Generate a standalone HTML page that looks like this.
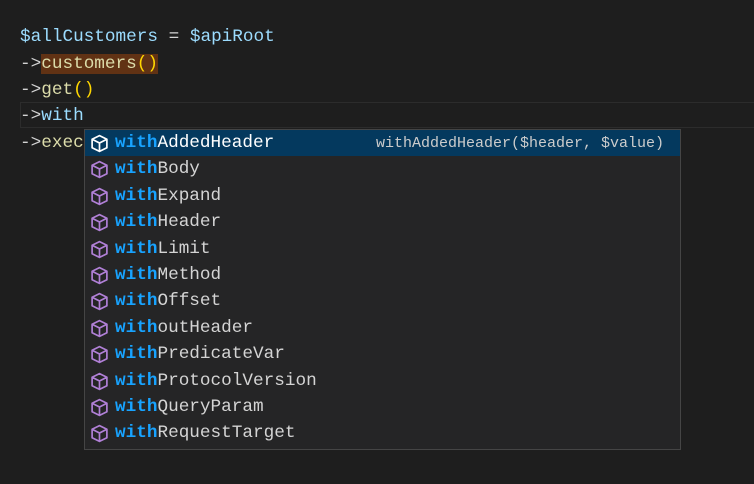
<!DOCTYPE html>
<html><head><style>
body{margin:0;width:754px;height:484px;background:#1e1e1e;overflow:hidden;position:relative;font-family:"Liberation Mono",monospace;font-size:17.7px;}
.l{position:absolute;left:20px;height:26px;line-height:26px;white-space:pre;color:#d4d4d4}
.v{color:#9cdcfe}.f{color:#dcdcaa}.p{color:#ffd700}
.cur{position:absolute;left:20px;right:0;top:102px;height:24px;border:1px solid #2c2c2c;border-right:none}
.pop{position:absolute;left:84px;top:129px;width:595px;height:319px;background:#252526;border:1px solid #454545}
.r{position:relative;height:26.4px;line-height:27px;color:#d4d4d4;white-space:pre}
.r.s{background:#04395e;color:#fff}
.r svg{position:absolute;left:5px;top:4px;display:block}
.r .t{position:absolute;left:30px}
.m{color:#18a3ff;font-weight:bold}
.d{position:absolute;left:291px;color:#ccc;font-size:15px}
</style></head><body>
<div class="l" style="top:24px"><span class="v">$allCustomers</span> = <span class="v">$apiRoot</span></div>
<div class="l" style="top:51px">-&gt;<span style="background:#613214"><span class="f">customers</span><span class="p">()</span></span></div>
<div class="l" style="top:77px">-&gt;<span class="f">get</span><span class="p">()</span></div>
<div class="cur"></div>
<div class="l" style="top:103px">-&gt;<span class="v">with</span></div>
<div class="l" style="top:130px">-&gt;<span class="f">exec</span></div>
<div class="pop">
<div class="r s"><svg width="19" height="19" viewBox="0 0 18 18" fill="none" stroke="#fff" stroke-width="1.6" stroke-linejoin="round"><path d="M9 1.5L16 5v8l-7 3.5L2 13V5z M2 5l7 3.5L16 5 M9 8.5v8"/></svg><span class="t"><span class="m">with</span>AddedHeader</span><span class="d">withAddedHeader($header, $value)</span></div>
<div class="r"><svg width="19" height="19" viewBox="0 0 18 18" fill="none" stroke="#b180d7" stroke-width="1.6" stroke-linejoin="round"><path d="M9 1.5L16 5v8l-7 3.5L2 13V5z M2 5l7 3.5L16 5 M9 8.5v8"/></svg><span class="t"><span class="m">with</span>Body</span></div>
<div class="r"><svg width="19" height="19" viewBox="0 0 18 18" fill="none" stroke="#b180d7" stroke-width="1.6" stroke-linejoin="round"><path d="M9 1.5L16 5v8l-7 3.5L2 13V5z M2 5l7 3.5L16 5 M9 8.5v8"/></svg><span class="t"><span class="m">with</span>Expand</span></div>
<div class="r"><svg width="19" height="19" viewBox="0 0 18 18" fill="none" stroke="#b180d7" stroke-width="1.6" stroke-linejoin="round"><path d="M9 1.5L16 5v8l-7 3.5L2 13V5z M2 5l7 3.5L16 5 M9 8.5v8"/></svg><span class="t"><span class="m">with</span>Header</span></div>
<div class="r"><svg width="19" height="19" viewBox="0 0 18 18" fill="none" stroke="#b180d7" stroke-width="1.6" stroke-linejoin="round"><path d="M9 1.5L16 5v8l-7 3.5L2 13V5z M2 5l7 3.5L16 5 M9 8.5v8"/></svg><span class="t"><span class="m">with</span>Limit</span></div>
<div class="r"><svg width="19" height="19" viewBox="0 0 18 18" fill="none" stroke="#b180d7" stroke-width="1.6" stroke-linejoin="round"><path d="M9 1.5L16 5v8l-7 3.5L2 13V5z M2 5l7 3.5L16 5 M9 8.5v8"/></svg><span class="t"><span class="m">with</span>Method</span></div>
<div class="r"><svg width="19" height="19" viewBox="0 0 18 18" fill="none" stroke="#b180d7" stroke-width="1.6" stroke-linejoin="round"><path d="M9 1.5L16 5v8l-7 3.5L2 13V5z M2 5l7 3.5L16 5 M9 8.5v8"/></svg><span class="t"><span class="m">with</span>Offset</span></div>
<div class="r"><svg width="19" height="19" viewBox="0 0 18 18" fill="none" stroke="#b180d7" stroke-width="1.6" stroke-linejoin="round"><path d="M9 1.5L16 5v8l-7 3.5L2 13V5z M2 5l7 3.5L16 5 M9 8.5v8"/></svg><span class="t"><span class="m">with</span>outHeader</span></div>
<div class="r"><svg width="19" height="19" viewBox="0 0 18 18" fill="none" stroke="#b180d7" stroke-width="1.6" stroke-linejoin="round"><path d="M9 1.5L16 5v8l-7 3.5L2 13V5z M2 5l7 3.5L16 5 M9 8.5v8"/></svg><span class="t"><span class="m">with</span>PredicateVar</span></div>
<div class="r"><svg width="19" height="19" viewBox="0 0 18 18" fill="none" stroke="#b180d7" stroke-width="1.6" stroke-linejoin="round"><path d="M9 1.5L16 5v8l-7 3.5L2 13V5z M2 5l7 3.5L16 5 M9 8.5v8"/></svg><span class="t"><span class="m">with</span>ProtocolVersion</span></div>
<div class="r"><svg width="19" height="19" viewBox="0 0 18 18" fill="none" stroke="#b180d7" stroke-width="1.6" stroke-linejoin="round"><path d="M9 1.5L16 5v8l-7 3.5L2 13V5z M2 5l7 3.5L16 5 M9 8.5v8"/></svg><span class="t"><span class="m">with</span>QueryParam</span></div>
<div class="r"><svg width="19" height="19" viewBox="0 0 18 18" fill="none" stroke="#b180d7" stroke-width="1.6" stroke-linejoin="round"><path d="M9 1.5L16 5v8l-7 3.5L2 13V5z M2 5l7 3.5L16 5 M9 8.5v8"/></svg><span class="t"><span class="m">with</span>RequestTarget</span></div>
</div>
</body></html>
